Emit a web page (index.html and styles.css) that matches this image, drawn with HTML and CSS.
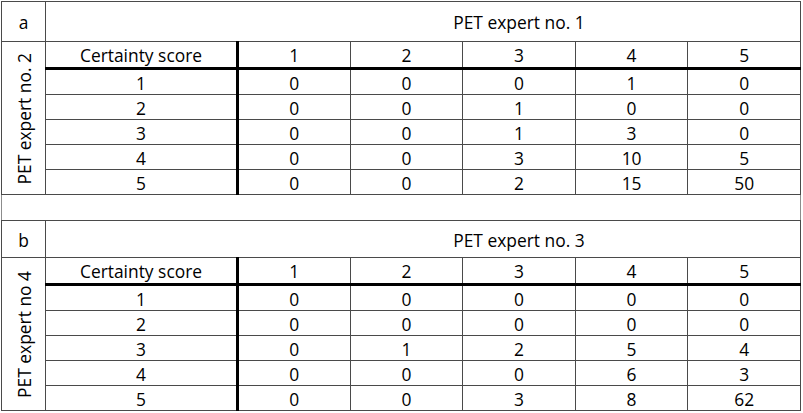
FILE: index.html
```html
<!DOCTYPE html>
<html>
<head>
<meta charset="utf-8">
<link rel="stylesheet" href="styles.css">
</head>
<body>
<table class="grid">
  <colgroup>
    <col class="c-label"><col class="c-score"><col class="c-n"><col class="c-n"><col class="c-n"><col class="c-n"><col class="c-n">
  </colgroup>
  <tbody>
    <tr class="title-row">
      <td class="panel">a</td>
      <td class="title" colspan="6"><span>PET expert no. 1</span></td>
    </tr>
    <tr class="head-row">
      <td class="side" rowspan="6"><div class="vert">PET expert no. 2</div></td>
      <td class="score">Certainty score</td><td>1</td><td>2</td><td>3</td><td>4</td><td>5</td>
    </tr>
    <tr class="data-row"><td class="score">1</td><td>0</td><td>0</td><td>0</td><td>1</td><td>0</td></tr>
    <tr class="data-row"><td class="score">2</td><td>0</td><td>0</td><td>1</td><td>0</td><td>0</td></tr>
    <tr class="data-row"><td class="score">3</td><td>0</td><td>0</td><td>1</td><td>3</td><td>0</td></tr>
    <tr class="data-row"><td class="score">4</td><td>0</td><td>0</td><td>3</td><td>10</td><td>5</td></tr>
    <tr class="data-row"><td class="score">5</td><td>0</td><td>0</td><td>2</td><td>15</td><td>50</td></tr>
    <tr class="gap-row"><td colspan="7"></td></tr>
    <tr class="title-row b">
      <td class="panel">b</td>
      <td class="title" colspan="6"><span>PET expert no. 3</span></td>
    </tr>
    <tr class="head-row b">
      <td class="side" rowspan="6"><div class="vert">PET expert no 4</div></td>
      <td class="score">Certainty score</td><td>1</td><td>2</td><td>3</td><td>4</td><td>5</td>
    </tr>
    <tr class="data-row"><td class="score">1</td><td>0</td><td>0</td><td>0</td><td>0</td><td>0</td></tr>
    <tr class="data-row"><td class="score">2</td><td>0</td><td>0</td><td>0</td><td>0</td><td>0</td></tr>
    <tr class="data-row"><td class="score">3</td><td>0</td><td>1</td><td>2</td><td>5</td><td>4</td></tr>
    <tr class="data-row"><td class="score">4</td><td>0</td><td>0</td><td>0</td><td>6</td><td>3</td></tr>
    <tr class="data-row"><td class="score">5</td><td>0</td><td>0</td><td>3</td><td>8</td><td>62</td></tr>
  </tbody>
</table>
</body>
</html>
```

FILE: styles.css
```css
html, body {
  margin: 0;
  padding: 0;
  background: #fff;
}

body {
  padding: 1px 0 0 1px;
  font-family: "Open Sans", "Liberation Sans", sans-serif;
  font-size: 17.4px;
  color: #000;
}

.grid {
  border-collapse: collapse;
  table-layout: fixed;
  width: 800px;
  border: 1px solid #8c8c8c;
}

.c-label { width: 44px; }
.c-score { width: 192px; }

.grid td {
  border: 1px solid #4a4a4a;
  padding: 1px 0 0 0;
  text-align: center;
  vertical-align: middle;
  line-height: 20px;
  white-space: nowrap;
}

.title-row td { height: 38px; }
.title-row.b td { height: 35px; }

.title span {
  display: block;
  padding-left: 192px;
}

.head-row td {
  height: 24px;
  border-bottom: 3px solid #000;
}

.head-row .side { border-bottom: 1px solid #4a4a4a; }

.data-row td { height: 23px; }

.grid td.score { border-right: 3px solid #000; }

.gap-row td {
  height: 24px;
  border-left-color: #8c8c8c;
  border-right-color: #8c8c8c;
}

.side { padding: 0; }

.vert {
  writing-mode: vertical-rl;
  transform: rotate(180deg);
  margin: 0 auto;
  line-height: 20px;
}
```
